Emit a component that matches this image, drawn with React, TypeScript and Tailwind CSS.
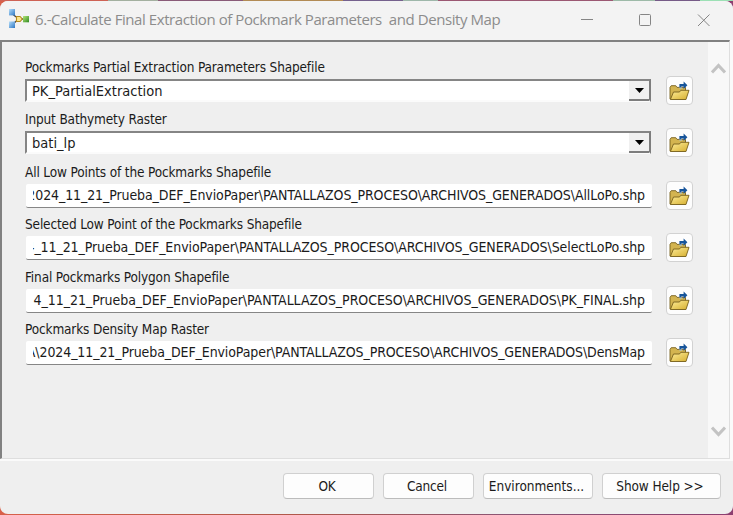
import React from "react";

type Field = {
  label: string;
  value: string;
  kind: "combo" | "path";
  height: string;
  valueTracking: string;
};

const fields: Field[] = [
  { label: "Pockmarks Partial Extraction Parameters Shapefile", value: "PK_PartialExtraction", kind: "combo", height: "h-[52px]", valueTracking: "tracking-[0px]" },
  { label: "Input Bathymety Raster", value: "bati_lp", kind: "combo", height: "h-[53px]", valueTracking: "tracking-[0px]" },
  { label: "All Low Points of the Pockmarks Shapefile", value: "2024_11_21_Prueba_DEF_EnvioPaper\\PANTALLAZOS_PROCESO\\ARCHIVOS_GENERADOS\\AllLoPo.shp", kind: "path", height: "h-[52px]", valueTracking: "tracking-[-0.1px]" },
  { label: "Selected Low Point of the Pockmarks Shapefile", value: "4_11_21_Prueba_DEF_EnvioPaper\\PANTALLAZOS_PROCESO\\ARCHIVOS_GENERADOS\\SelectLoPo.shp", kind: "path", height: "h-[53px]", valueTracking: "tracking-[-0.08px]" },
  { label: "Final Pockmarks Polygon Shapefile", value: "4_11_21_Prueba_DEF_EnvioPaper\\PANTALLAZOS_PROCESO\\ARCHIVOS_GENERADOS\\PK_FINAL.shp", kind: "path", height: "h-[52px]", valueTracking: "tracking-[-0.05px]" },
  { label: "Pockmarks Density Map Raster", value: "A\\2024_11_21_Prueba_DEF_EnvioPaper\\PANTALLAZOS_PROCESO\\ARCHIVOS_GENERADOS\\DensMap", kind: "path", height: "h-[53px]", valueTracking: "tracking-[-0.1px]" },
];

function ModelIcon() {
  return (
    <svg width="22" height="21" viewBox="0 0 22 21" className="mt-[8px] shrink-0 self-start">
      <defs>
        <linearGradient id="blueBox" x1="0" y1="0" x2="1" y2="1">
          <stop offset="0" stopColor="#b4dcf8" />
          <stop offset="1" stopColor="#2f78c4" />
        </linearGradient>
        <linearGradient id="greenBox" x1="0" y1="0" x2="1" y2="1">
          <stop offset="0" stopColor="#b5e67a" />
          <stop offset="1" stopColor="#2f8a20" />
        </linearGradient>
      </defs>
      <path d="M5.5 6L9 8.5M5.5 14.5L9 11.5M13 10h3" fill="none" stroke="#444" strokeWidth="1.4" />
      <rect x="1" y="0" width="6" height="6.4" fill="url(#blueBox)" />
      <rect x="1" y="12.5" width="6" height="6.5" fill="url(#blueBox)" />
      <path d="M8.5 7.5h3.6l2.2 2.5-2.2 2.5H8.5z" fill="#fbe58a" stroke="#b58a20" strokeWidth="1.1" />
      <rect x="15" y="7" width="6" height="6.3" fill="url(#greenBox)" />
    </svg>
  );
}

function FolderIcon() {
  return (
    <svg width="21" height="21" viewBox="0 0 21 21">
      <defs>
        <linearGradient id="folderFront" x1="0" y1="0" x2="1" y2="1">
          <stop offset="0" stopColor="#ffee9a" />
          <stop offset="1" stopColor="#d5ae2e" />
        </linearGradient>
      </defs>
      <path d="M1 19V7.4l1.2-1.7h4.6L8 7.4h8.5v3.5L16 19z" fill="#d3b450" stroke="#77601c" strokeWidth=".9" />
      <path d="M1.4 19.5L4.5 12h6l1.3-1.7h8.2l-3 9.2z" fill="url(#folderFront)" stroke="#77601c" strokeWidth=".9" strokeLinejoin="round" />
      <path d="M10.4 7.6V4h4.2V1.6l3.8 3.7-3.8 3.7V6.6h-2.4v1z" fill="#17559b" />
      <path d="M10.4 8h2.6" stroke="#9fc4e8" strokeWidth="1.2" />
    </svg>
  );
}

function FieldRow({ field }: { field: Field }) {
  return (
    <div className={`flex ${field.height}`}>
      <div className="w-[628px] shrink-0">
        <div className="h-[20px] whitespace-pre text-[13.5px] leading-[17px] tracking-[-0.15px]">{field.label}</div>
        {field.kind === "combo" ? (
          <div className="flex h-[23px] w-[626px] border-2 border-[#858585] border-b-[#fbfbfb] border-r-[#7d7d7d] bg-white">
            <span className={`flex-1 pl-[5px] text-[14.5px] leading-[20px] ${field.valueTracking}`}>{field.value}</span>
            <span className="flex h-[20px] w-[20px] items-center justify-center border-b-2 border-[#7d7d7d] bg-[#f0f0f0]">
              <svg width="9" height="5" viewBox="0 0 9 5"><path d="M0 0h9L4.5 5z" fill="#000" /></svg>
            </span>
          </div>
        ) : (
          <div className="ml-px flex h-[24px] w-[626px] rounded-[2px] border-b border-[#868686] bg-white pl-[7px] pr-[7px]">
            <div className="flex flex-1 justify-end overflow-hidden">
              <span className={`shrink-0 whitespace-pre text-[14px] leading-[22px] ${field.valueTracking}`}>{field.value}</span>
            </div>
          </div>
        )}
      </div>
      <button className="ml-[13px] mt-[17px] flex h-[29px] w-[27px] items-center justify-center rounded-[4px] border border-[#d2d2d2] bg-[#fdfdfd]">
        <FolderIcon />
      </button>
    </div>
  );
}

function DialogButton({ children, width, tracking }: { children: React.ReactNode; width: string; tracking: string }) {
  return (
    <button className={`h-[26px] ${width} ${tracking} whitespace-nowrap rounded-[4px] border border-[#d0d0d0] border-b-[#bcbcbc] bg-[#fdfdfd] pr-[3px] text-[13.5px] leading-[22px]`}>
      {children}
    </button>
  );
}

export default function App() {
  return (
    <div className="h-[515px] w-[733px] overflow-hidden bg-[linear-gradient(90deg,#d8604a_0%,#b0584a_40%,#8a5575_70%,#8d3f70_100%)] font-['DejaVu_Sans_Condensed','DejaVu_Sans',sans-serif] text-[#1b1b1b] [font-stretch:condensed]">
      <div className="flex h-px">
        <div className="w-[108px] bg-[#ce6255]" />
        <div className="w-[50px] bg-[#a3b0a0]" />
        <div className="w-[85px] bg-[#895b78]" />
        <div className="w-[100px] bg-[#b28b55]" />
        <div className="w-[60px] bg-[#75618d]" />
        <div className="w-[35px] bg-[#9eb7aa]" />
        <div className="w-[175px] bg-[#9b5872]" />
        <div className="w-[42px] bg-[#9dbaa8]" />
        <div className="w-[45px] bg-[#765b87]" />
        <div className="flex-1 bg-[#9ce0b5]" />
      </div>
      <div className="flex h-[513px] flex-col overflow-hidden rounded-[8px] bg-[#efefef]">
        <header className="flex h-[39px] shrink-0 items-center bg-[#f3f3f3] pl-[8px]">
          <ModelIcon />
          <h1 className="-mt-[3px] ml-[5px] w-[470px] whitespace-pre font-['Open_Sans','Noto_Sans',sans-serif] text-[15px] leading-[22px] tracking-[-0.42px] text-[#8c8c8c] [font-stretch:normal]">{"6.-Calculate Final Extraction of Pockmark Parameters  and Density Map"}</h1>
          <svg className="-mt-[2px] ml-[75px]" width="132" height="15" viewBox="0 0 132 15" fill="none" stroke="#858585">
            <path d="M1 7.5h12" />
            <rect x="59.5" y="2.5" width="11" height="11" rx="1" />
            <path d="M118 2.5l11.5 11.5M129.5 2.5l-11.5 11.5" />
          </svg>
        </header>
        <div className="flex h-[421px] shrink-0 bg-[#fafafa] pb-[2px] pr-[3px]">
          <main className="flex flex-1 border-b border-l-2 border-r border-t-2 border-b-[#dedede] border-l-[#818181] border-r-[#dedede] border-t-[#818181]">
            <div className="w-[706px] bg-[#efefef] pl-[23px] pt-[17px]">
              {fields.map((field) => <FieldRow key={field.label} field={field} />)}
            </div>
            <div className="flex flex-1 flex-col items-center justify-between bg-[#f8f8f8] pb-[20px] pt-[20px]">
              <svg width="15" height="13" viewBox="0 0 15 13"><path d="M1 10.5l6.5-7 6.5 7" fill="none" stroke="#c3c3c3" strokeWidth="3" /></svg>
              <svg width="15" height="13" viewBox="0 0 15 13"><path d="M1 2.5l6.5 7 6.5-7" fill="none" stroke="#c3c3c3" strokeWidth="3" /></svg>
            </div>
          </main>
        </div>
        <footer className="flex flex-1 pl-[283px] pt-[12px]">
          <DialogButton width="w-[91px]" tracking="tracking-[-0.2px]">OK</DialogButton>
          <div className="w-[9px]" />
          <DialogButton width="w-[91px]" tracking="tracking-[-0.2px]">Cancel</DialogButton>
          <div className="w-[9px]" />
          <DialogButton width="w-[110px]" tracking="tracking-[0px]">Environments...</DialogButton>
          <div className="w-[9px]" />
          <DialogButton width="w-[119px]" tracking="tracking-[-0.1px]">Show Help &gt;&gt;</DialogButton>
        </footer>
      </div>
    </div>
  );
}
